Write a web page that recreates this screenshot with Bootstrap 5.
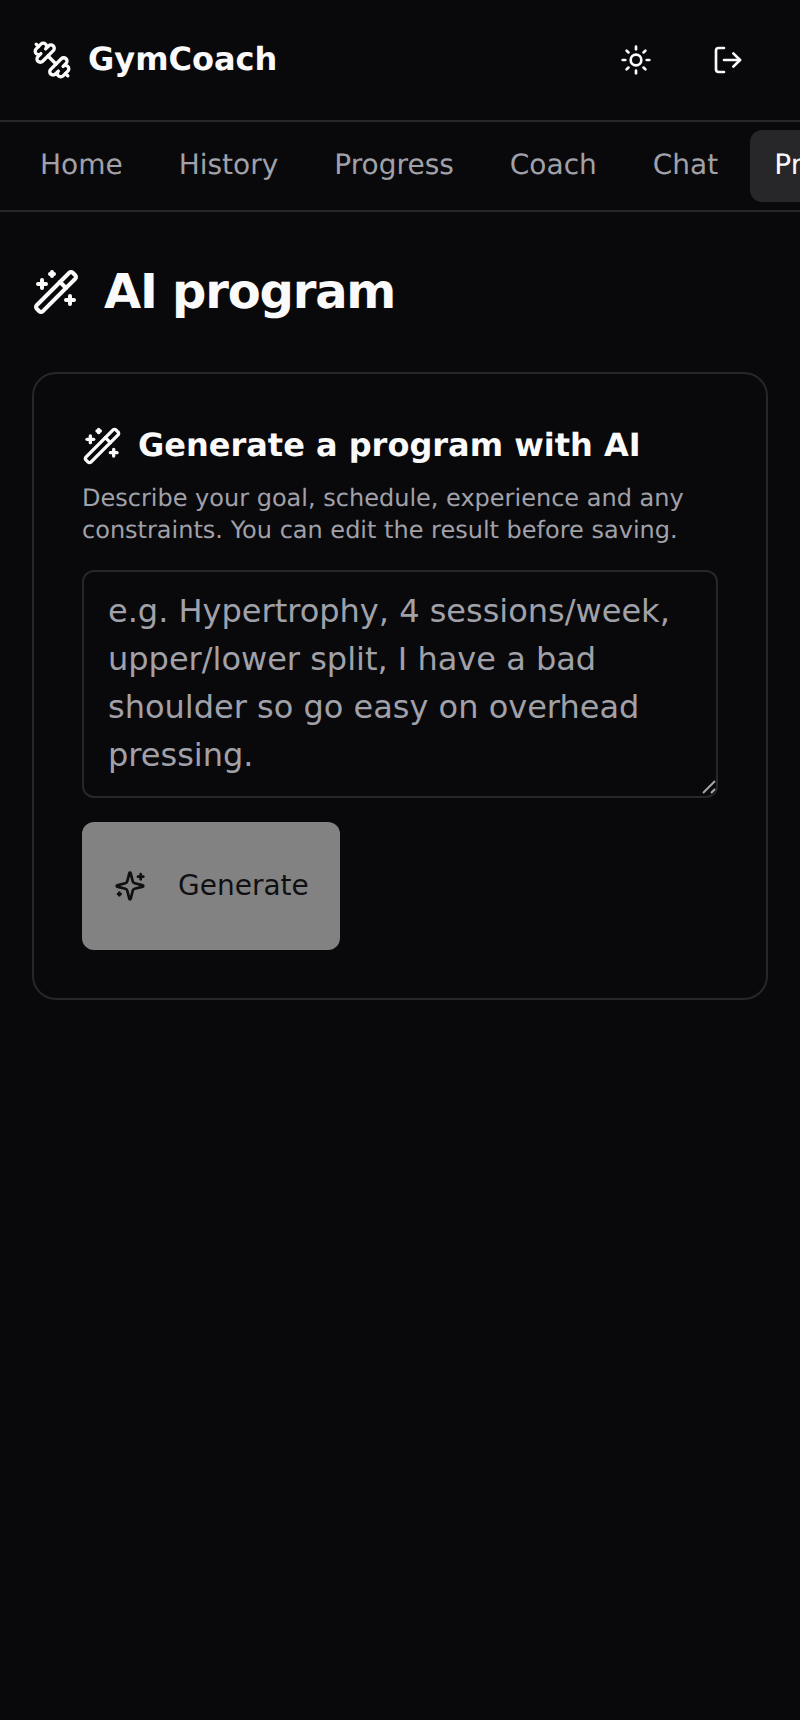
<!DOCTYPE html>
<html lang="en">
<head>
<meta charset="utf-8">
<title>GymCoach</title>
<link href="https://cdn.jsdelivr.net/npm/bootstrap@5.3.0/dist/css/bootstrap.min.css" rel="stylesheet">
<style>
html,body{background:#09090b;height:100%;}
body{font-family:"DejaVu Sans",sans-serif;color:#fafafa;overflow:hidden;text-rendering:geometricPrecision;}
svg.ico{fill:none;stroke:currentColor;stroke-width:2;stroke-linecap:round;stroke-linejoin:round;flex:none;display:block;}
.top-head{height:122px;padding:0 32px;border-bottom:2px solid #27272a;}
.brand-name{font-size:32px;font-weight:700;line-height:46px;padding-bottom:2px;color:#fafafa;}
.head-actions{gap:12px;}
.head-btn{width:80px;height:80px;background:transparent;border:0;color:#fafafa;padding:0;}
.tab-strip{border-bottom:2px solid #27272a;padding:8px 16px;overflow:hidden;flex-wrap:nowrap;gap:8px;height:90px;}
.tab-strip .nav-link{font-size:28px;line-height:40px;padding:15px 24px 17px;color:#a1a1aa;border-radius:12px;white-space:nowrap;flex:none;}
.tab-strip .nav-link.active{background:#27272a;color:#fafafa;}
.page-main{padding:32px;}
.page-title{font-size:48px;font-weight:700;line-height:72px;letter-spacing:-1.2px;margin:12px 0 44px;color:#fafafa;}
.gen-card{background:transparent;border:2px solid #27272a;border-radius:24px;padding:48px;color:#fafafa;}
.gen-title{font-size:32px;font-weight:700;line-height:48px;margin:0;color:#fafafa;}
.gen-title-text{line-height:46px;padding-bottom:2px;}
.gen-sub{font-size:24px;line-height:32px;color:#a1a1aa;margin:12px 0 24px;}
.gen-input{background:transparent;border:2px solid #27272a;border-radius:12px;font-size:32px;line-height:48px;padding:15px 24px 17px;color:#fafafa;height:228px;resize:none;}
.gen-input::placeholder{color:#a1a1aa;opacity:1;}
.gen-input:focus{background:transparent;color:#fafafa;border-color:#27272a;box-shadow:none;}
.grip-mark{position:absolute;right:0;bottom:4px;stroke:#a8a8a8;stroke-width:2;fill:none;display:block;}
.gen-btn,.gen-btn:disabled{background:#fafafa;border:0;color:#18181b;font-size:28px;line-height:40px;padding:44px 31px 44px 32px;border-radius:12px;opacity:.5;gap:32px;margin-top:24px;}
</style>
</head>
<body>
<header class="top-head d-flex align-items-center justify-content-between">
  <div class="d-flex align-items-center gap-3">
    <svg class="ico" width="40" height="40" viewBox="0 0 24 24"><g transform="translate(24 0) scale(-1 1)"><path d="M17.596 12.768a2 2 0 1 0 2.829-2.829l-1.768-1.767a2 2 0 0 0 2.828-2.829l-2.828-2.828a2 2 0 0 0-2.829 2.828l-1.767-1.768a2 2 0 1 0-2.829 2.829z"/><path d="m2.5 21.5 1.4-1.4"/><path d="m20.1 3.9 1.4-1.4"/><path d="M5.343 21.485a2 2 0 1 0 2.829-2.828l1.767 1.768a2 2 0 1 0 2.829-2.829l-6.364-6.364a2 2 0 1 0-2.829 2.829l1.768 1.767a2 2 0 0 0-2.828 2.829z"/><path d="m9.6 14.4 4.8-4.8"/></g></svg>
    <span class="brand-name">GymCoach</span>
  </div>
  <div class="d-flex align-items-center head-actions">
    <button class="btn head-btn d-flex align-items-center justify-content-center" type="button" aria-label="Theme"><svg class="ico" width="32" height="32" viewBox="0 0 24 24"><circle cx="12" cy="12" r="4"/><path d="M12 2v2"/><path d="M12 20v2"/><path d="m4.93 4.93 1.41 1.41"/><path d="m17.66 17.66 1.41 1.41"/><path d="M2 12h2"/><path d="M20 12h2"/><path d="m6.34 17.66-1.41 1.41"/><path d="m19.07 4.93-1.41 1.41"/></svg></button>
    <button class="btn head-btn d-flex align-items-center justify-content-center" type="button" aria-label="Log out"><svg class="ico" width="32" height="32" viewBox="0 0 24 24"><path d="M9 21H5a2 2 0 0 1-2-2V5a2 2 0 0 1 2-2h4"/><path d="m16 17 5-5-5-5"/><path d="M21 12H9"/></svg></button>
  </div>
</header>
<nav class="nav tab-strip">
  <a class="nav-link" href="#">Home</a>
  <a class="nav-link" href="#">History</a>
  <a class="nav-link" href="#">Progress</a>
  <a class="nav-link" href="#">Coach</a>
  <a class="nav-link" href="#">Chat</a>
  <a class="nav-link active" href="#">Program</a>
</nav>
<main class="page-main">
  <h1 class="page-title d-flex align-items-center gap-4">
    <svg class="ico" width="48" height="48" viewBox="0 0 24 24"><path d="m21.64 3.64-1.28-1.28a1.21 1.21 0 0 0-1.72 0L2.36 18.64a1.21 1.21 0 0 0 0 1.72l1.28 1.28a1.2 1.2 0 0 0 1.72 0L21.64 5.36a1.2 1.2 0 0 0 0-1.72"/><path d="m14 7 3 3"/><path d="M5 6v4"/><path d="M19 14v4"/><path d="M10 2v2"/><path d="M7 8H3"/><path d="M21 16h-4"/><path d="M11 3H9"/></svg>
    AI program
  </h1>
  <section class="card gen-card">
    <h2 class="gen-title d-flex align-items-center gap-3">
      <svg class="ico" width="40" height="40" viewBox="0 0 24 24"><path d="m21.64 3.64-1.28-1.28a1.21 1.21 0 0 0-1.72 0L2.36 18.64a1.21 1.21 0 0 0 0 1.72l1.28 1.28a1.2 1.2 0 0 0 1.72 0L21.64 5.36a1.2 1.2 0 0 0 0-1.72"/><path d="m14 7 3 3"/><path d="M5 6v4"/><path d="M19 14v4"/><path d="M10 2v2"/><path d="M7 8H3"/><path d="M21 16h-4"/><path d="M11 3H9"/></svg>
      <span class="gen-title-text">Generate a program with AI</span>
    </h2>
    <p class="gen-sub">Describe your goal, schedule, experience and any constraints. You can edit the result before saving.</p>
    <div class="position-relative">
      <textarea class="form-control gen-input" placeholder="e.g. Hypertrophy, 4 sessions/week, upper/lower split, I have a bad shoulder so go easy on overhead pressing."></textarea>
      <svg class="grip-mark" width="16" height="14" viewBox="0 0 16 14" aria-hidden="true"><path d="M1 13 13 1"/><path d="M9 13 13 9"/></svg>
    </div>
    <div class="d-flex">
      <button class="btn gen-btn d-inline-flex align-items-center" type="button" disabled>
        <svg class="ico" width="32" height="32" viewBox="0 0 24 24"><path d="M9.937 15.5A2 2 0 0 0 8.5 14.063l-6.135-1.582a.5.5 0 0 1 0-.962L8.5 9.936A2 2 0 0 0 9.937 8.5l1.582-6.135a.5.5 0 0 1 .963 0L14.063 8.5A2 2 0 0 0 15.5 9.937l6.135 1.581a.5.5 0 0 1 0 .964L15.5 14.063a2 2 0 0 0-1.437 1.437l-1.582 6.135a.5.5 0 0 1-.963 0z"/><path d="M20 3v4"/><path d="M22 5h-4"/><path d="M4 17v2"/><path d="M5 18H3"/></svg>
        Generate
      </button>
    </div>
  </section>
</main>
<script src="https://cdn.jsdelivr.net/npm/bootstrap@5.3.0/dist/js/bootstrap.bundle.min.js"></script>
</body>
</html>
